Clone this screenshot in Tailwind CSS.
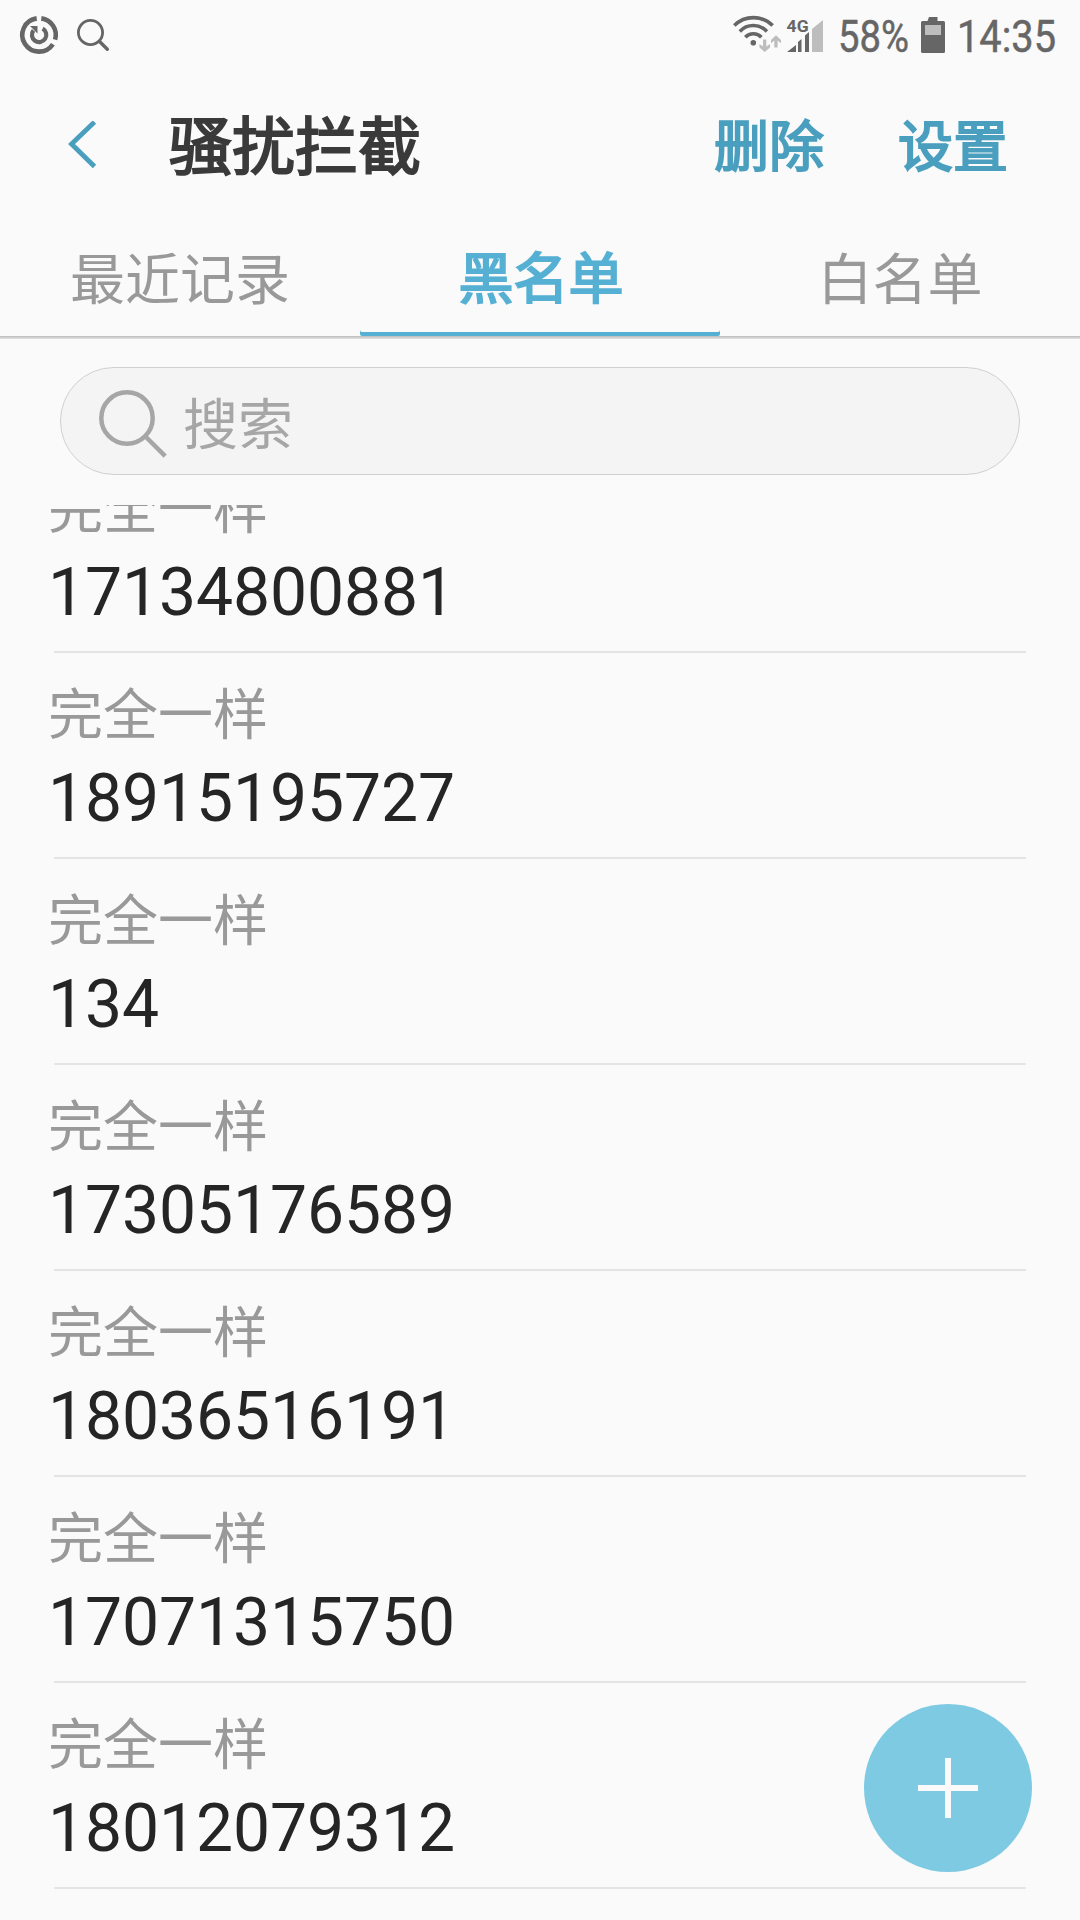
<!DOCTYPE html>
<html lang="zh-CN">
<head>
  <meta charset="UTF-8">
  <meta name="viewport" content="width=device-width, initial-scale=1.0">
  <title>骚扰拦截</title>
  <script src="https://cdn.jsdelivr.net/npm/@tailwindcss/browser@4"></script>
</head>
<body class="bg-[#fafafa] font-['Roboto','Noto_Sans_CJK_SC',sans-serif]">
  <div class="relative flex flex-col w-[1080px] h-[1920px] overflow-hidden">

    <!-- Status bar -->
    <div class="flex justify-between h-[72px] shrink-0">
      <svg class="w-[140px] h-[72px]" viewBox="0 0 140 72" fill="none" stroke="#666">
        <path d="M41.3 18.4A16.7 16.7 0 0 1 55.1 39.6M52.9 44.2A16.7 16.7 0 1 1 36.7 18.4" stroke-width="4.6"/>
        <path d="M42.6 28.6A7.2 7.2 0 1 1 33.5 30.4" stroke-width="4.2"/>
        <path d="M30 26H37.5V33.5Z" fill="#666" stroke="none"/>
        <circle cx="90.5" cy="32.5" r="12.1" stroke-width="2.8"/>
        <path d="M99.3 41.3L107.3 49.3" stroke-width="3.4" stroke-linecap="round"/>
      </svg>
      <svg class="w-[370px] h-[72px]" viewBox="710 0 370 72" fill="#666">
        <g fill="none" stroke="#666" stroke-width="3.6">
          <path d="M734.3 25.6A27 27 0 0 1 772.6 25.6"/>
          <path d="M739.8 31.4A18.5 18.5 0 0 1 766.9 31.4"/>
          <path d="M745.3 37.2A11 11 0 0 1 761.4 37.2"/>
        </g>
        <circle cx="753.3" cy="42.7" r="2.8"/>
        <g fill="#bdbdbd">
          <path d="M763 39.5H766.3V46.5L770 44V47.5L764.7 52L759.5 47.5V44L763 46.5Z"/>
          <path d="M774.3 47.5H777.6V40.5L781 43.3V40L776 35.3L771 40V43.3L774.3 40.5Z"/>
          <path d="M812 52V29L823 20V52Z"/>
        </g>
        <text x="786.6" y="32" font-size="16" font-weight="700" textLength="22" lengthAdjust="spacingAndGlyphs">4G</text>
        <path d="M787 52L796 45V52ZM798 52V42L801.5 39V52ZM805 52V35.5L809 32V52Z"/>
        <text x="838" y="52" font-size="44.5" stroke="#666" stroke-width=".5" textLength="71" lengthAdjust="spacingAndGlyphs">58%</text>
        <path d="M929 17H937.5V21H943.5Q945 21 945 22.5V51.5Q945 53 943.5 53H922.5Q921 53 921 51.5V22.5Q921 21 922.5 21H927.5Z"/>
        <path d="M925 25H941V35H925Z" fill="#bdbdbd"/>
        <text x="957" y="52" font-size="44.5" stroke="#666" stroke-width=".5" textLength="99" lengthAdjust="spacingAndGlyphs">14:35</text>
      </svg>
    </div>

    <!-- Title bar -->
    <header class="flex items-center h-[146px] shrink-0 pl-[66px] pr-[72px]">
      <svg class="w-8 h-12" viewBox="66 121 32 48" fill="none" stroke="#4a9fbf" stroke-width="4.8">
        <path d="M94.5 122L71.5 144L94.5 166.5"/>
      </svg>
      <h1 class="ml-[71px] pt-[5px] text-[63px] leading-[72px] [-webkit-text-stroke:2px] text-[#3a3a3a]">骚扰拦截</h1>
      <button class="ml-auto pt-[3px] text-[55px] leading-[64px] [-webkit-text-stroke:2px] text-[#4a9fbf]">删除</button>
      <button class="ml-[74px] pt-[3px] text-[55px] leading-[64px] [-webkit-text-stroke:2px] text-[#4a9fbf]">设置</button>
    </header>

    <!-- Tabs -->
    <nav class="grid grid-cols-3 h-[118px] shrink-0 text-[55px] leading-[124px] text-center text-[#999]">
      <a>最近记录</a>
      <a class="h-[118px] pl-[2px] leading-[122px] [-webkit-text-stroke:2px] text-[#55b0d3] shadow-[inset_0_-4px_0_#55b0d3] rounded-[2px]">黑名单</a>
      <a>白名单</a>
    </nav>
    <div class="h-[3px] shrink-0 bg-linear-to-b from-[#bdbdbd] to-[#e4e4e4]"></div>

    <!-- Search -->
    <div class="mx-[60px] mt-7 h-[108px] shrink-0 flex items-center pl-[36px] rounded-full border border-[#d0d0d0] bg-[#f4f4f4]">
      <svg class="w-[70px] h-[74px]" viewBox="97 384 70 74" fill="none" stroke="#a6a6a6">
        <circle cx="127" cy="418" r="25.7" stroke-width="4.5"/>
        <path d="M145.5 436.5L165.2 456.2" stroke-width="4.5"/>
      </svg>
      <span class="ml-4 pt-[7px] text-[55px] leading-[64px] text-[#a6a6a6]">搜索</span>
    </div>

    <!-- Blacklist -->
    <div class="mt-[30px] grow overflow-hidden">
      <ul id="list" class="-mt-[58px]"></ul>
    </div>

    <button class="absolute left-[864px] top-[1704px] size-[168px] rounded-full bg-[#7ecae2] flex items-center justify-center">
      <svg class="size-[60px]" viewBox="0 0 60 60" stroke="#fafafa" stroke-width="6">
        <path d="M30 0V60M0 30H60"/>
      </svg>
    </button>
  </div>

  <script>
    const numbers = ['17134800881', '18915195727', '134', '17305176589', '18036516191', '17071315750', '18012079312'];
    document.getElementById('list').innerHTML = numbers.map(n => `
      <li class="ml-[54px] mr-[54px] h-[206px] border-b-2 border-[#e4e4e4]">
        <div class="-ml-[6px] pt-[30px] text-[55px] leading-[64px] text-[#999]">完全一样</div>
        <div class="-ml-[6px] mt-[13px] text-[66px] leading-[78px] tracking-[-0.1px] text-[#252525]">${n}</div>
      </li>`).join('');
  </script>
</body>
</html>
